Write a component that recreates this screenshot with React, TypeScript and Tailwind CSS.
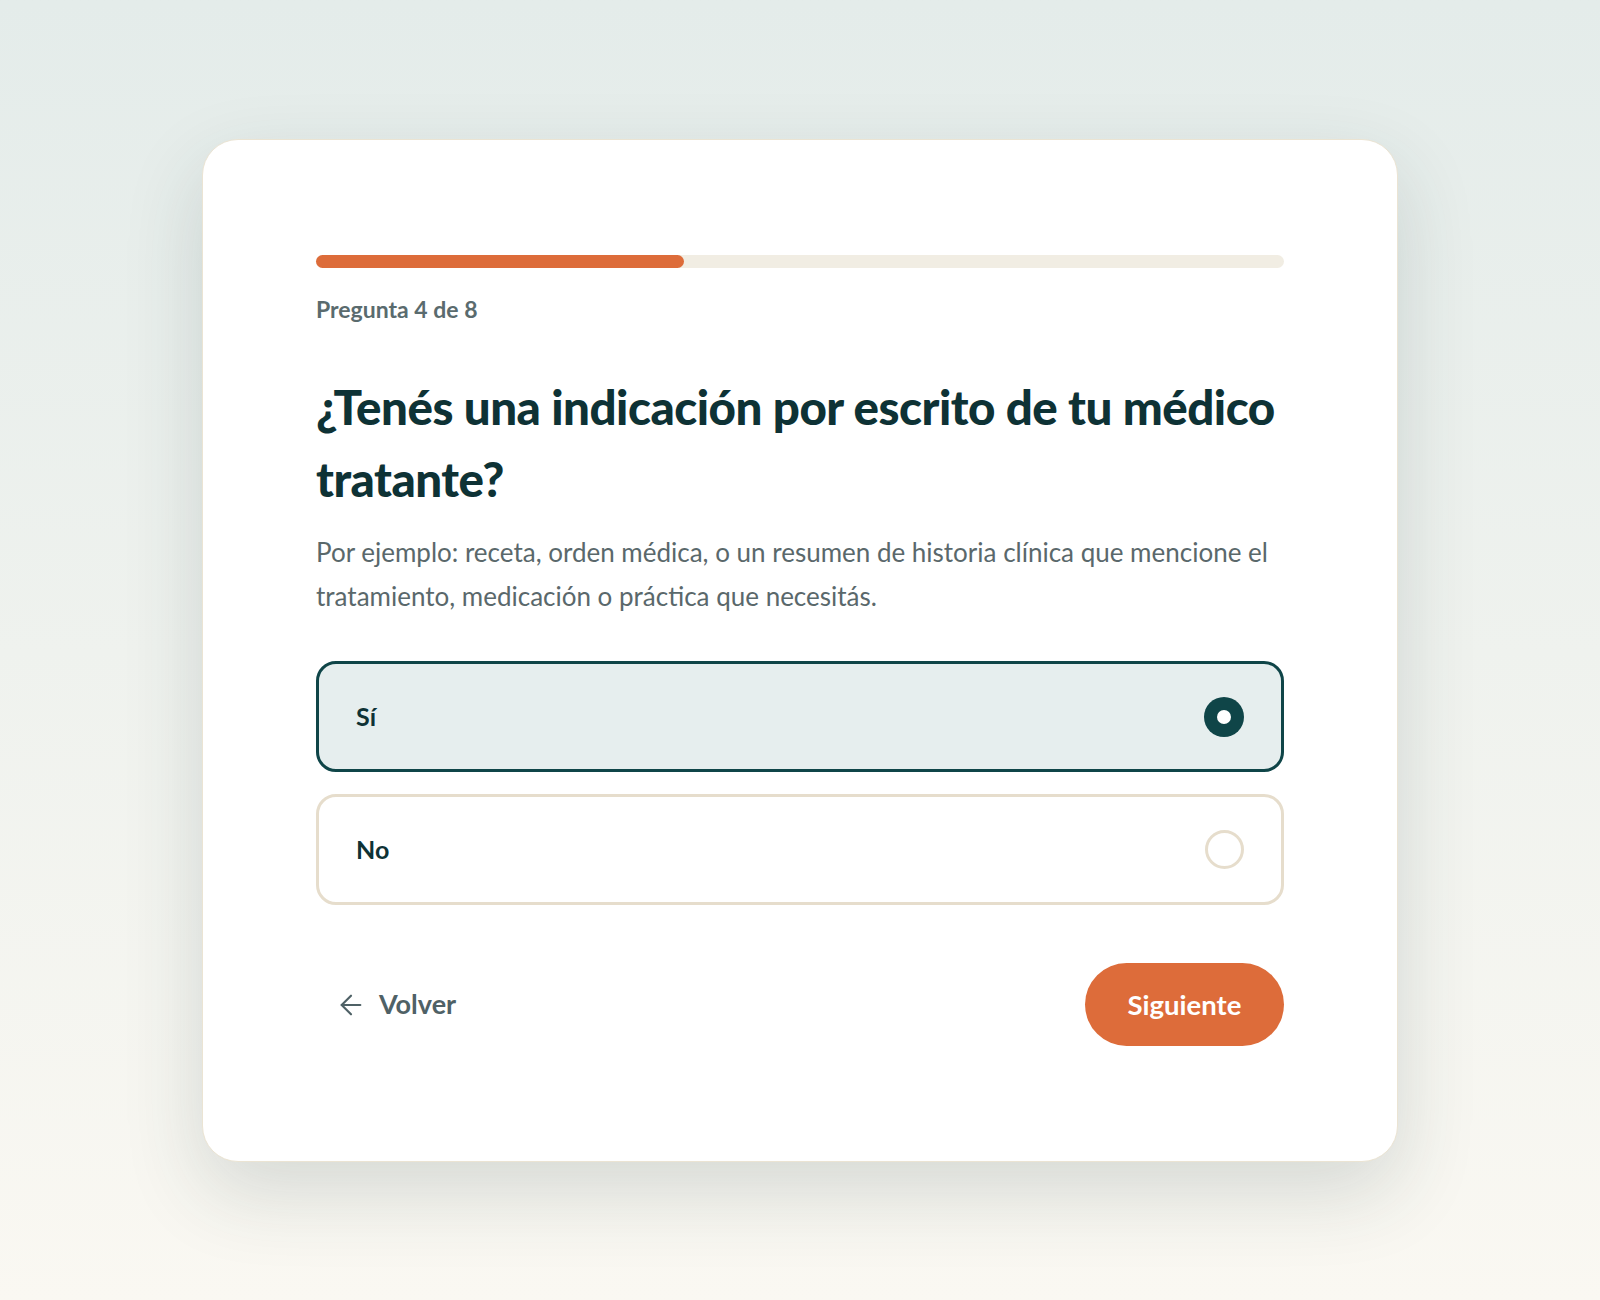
import React, { useState } from 'react';
import { ArrowLeft } from 'lucide-react';

const options = [
  { id: 'si', label: 'Sí' },
  { id: 'no', label: 'No' },
];

const headingFont = { fontFamily: 'Lato, "Noto Sans", sans-serif' };

const App = () => {
  const [selected, setSelected] = useState('si');
  const step = 4;
  const total = 8;

  return (
    <div className="min-h-[1300px] w-full bg-gradient-to-b from-[#e4ecea] to-[#faf8f2] pt-[139px] font-['Lato',sans-serif]">
      <div className="mx-auto w-[1196px] rounded-[36px] border border-[#ebe4d3] bg-white px-[113px] pt-[115px] pb-[115px] shadow-[0_30px_80px_rgba(40,60,60,0.16)]">
        {/* Progress */}
        <div className="h-[13px] w-full rounded-full bg-[#f1ede3]">
          <div
            className="h-full rounded-full bg-[#dd6c3a]"
            style={{ width: `${(step / total) * 100 - 12}%` }}
          />
        </div>
        <p className="mt-[26px] text-[23px] font-bold leading-[30px] text-[#5a6b6e]">
          Pregunta {step} de {total}
        </p>

        <h1
          className="mt-[47px] text-[47.5px] font-black leading-[72px] tracking-[-0.5px] text-[#0e3235]"
          style={headingFont}
        >
          ¿Tenés una indicación por escrito de tu médico tratante?
        </h1>
        <p className="mt-[15px] text-[26px] leading-[44px] text-[#5a686b]">
          Por ejemplo: receta, orden médica, o un resumen de historia clínica que mencione el
          tratamiento, medicación o práctica que necesitás.
        </p>

        {/* Options */}
        <div className="mt-[43px] flex flex-col gap-[22px]">
          {options.map((opt) => {
            const active = selected === opt.id;
            return (
              <button
                key={opt.id}
                onClick={() => setSelected(opt.id)}
                className={
                  active
                    ? 'flex h-[111px] w-full items-center justify-between rounded-[20px] border-[3px] border-[#0f4548] bg-[#e6eeee] pl-[37px] pr-[37px] text-left'
                    : 'flex h-[111px] w-full items-center justify-between rounded-[20px] border-[3px] border-[#e6ddcc] bg-white pl-[37px] pr-[37px] text-left'
                }
              >
                <span className="text-[25px] font-bold text-[#0e3235]">{opt.label}</span>
                {active ? (
                  <span className="flex h-[40px] w-[40px] items-center justify-center rounded-full bg-[#0f4548]">
                    <span className="h-[14px] w-[14px] rounded-full bg-white" />
                  </span>
                ) : (
                  <span className="h-[39px] w-[39px] rounded-full border-[3px] border-[#e6ddcc]" />
                )}
              </button>
            );
          })}
        </div>

        {/* Footer */}
        <div className="mt-[58px] flex items-center justify-between">
          <button className="flex items-center gap-[12px] pl-[19px] text-[#4f6166]" style={headingFont}>
            <ArrowLeft className="h-[32px] w-[32px]" strokeWidth={1.6} />
            <span className="text-[27px] font-bold">Volver</span>
          </button>
          <button
            className="flex h-[83px] w-[199px] items-center justify-center rounded-full bg-[#dd6c3a] text-[27.5px] font-bold text-white"
            style={headingFont}
          >
            Siguiente
          </button>
        </div>
      </div>
    </div>
  );
};

export default App;
